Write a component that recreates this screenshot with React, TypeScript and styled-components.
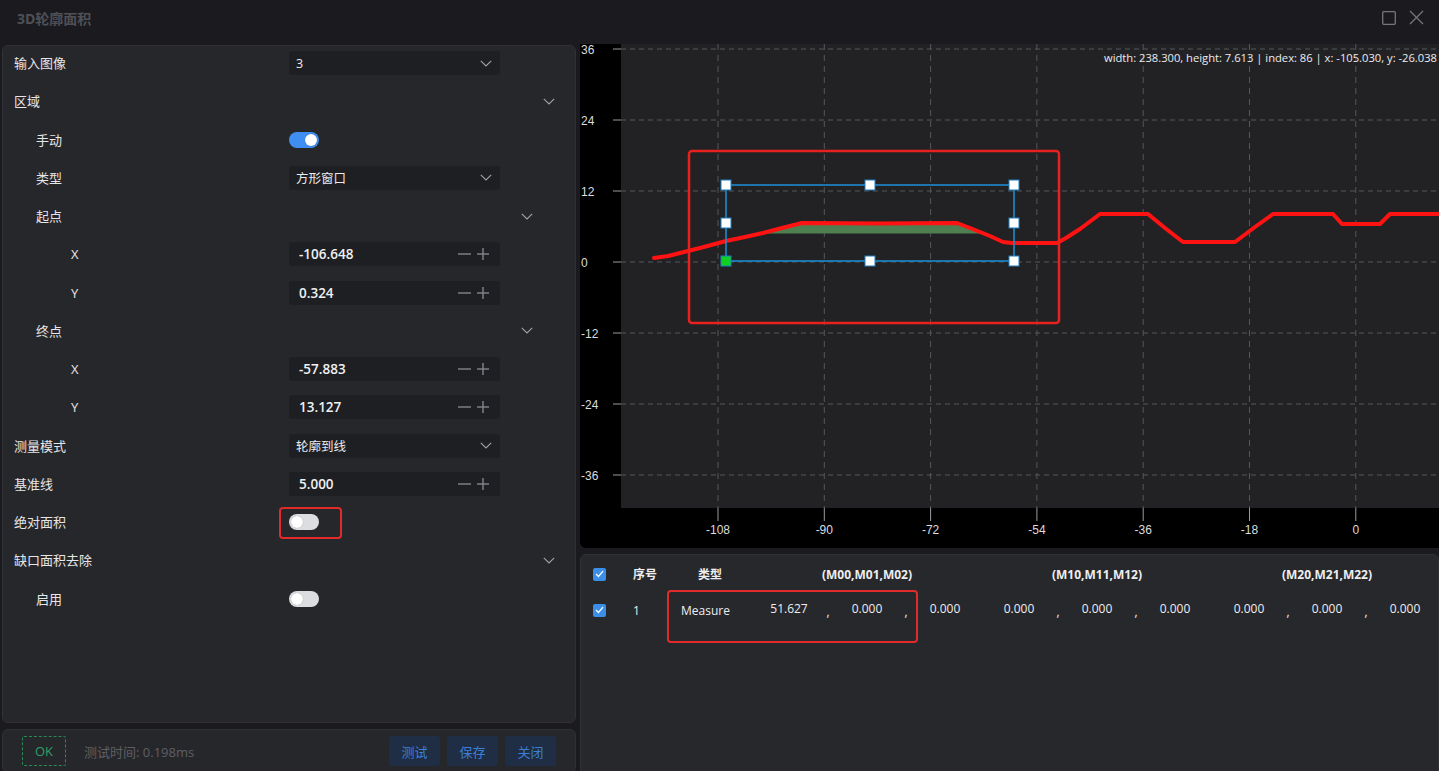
import React from 'react';
import styled, { createGlobalStyle } from 'styled-components';

const FONT = `"Open Sans", "Noto Sans CJK SC", sans-serif`;

const GlobalStyle = createGlobalStyle`
  html, body { margin: 0; padding: 0; background: #1b1b1f; }
  body { font-family: ${FONT}; }
  #root { width: 1439px; height: 771px; }
`;

const Root = styled.div`
  width: 1439px;
  height: 771px;
  overflow: hidden;
  background: #1b1b1f;
  display: flex;
  flex-direction: column;
  font-family: ${FONT};
  color: #e4e4e6;
`;

const TitleBar = styled.div`
  flex: 0 0 44px;
  height: 44px;
  box-sizing: border-box;
  display: flex;
  align-items: flex-start;
  justify-content: space-between;
  padding: 9px 15px 0 17px;
`;

const Title = styled.div`
  font-size: 14px;
  font-weight: 700;
  line-height: 20px;
  color: #4f5056;
`;

const WinButtons = styled.div`
  display: flex;
  align-items: center;
  gap: 13px;
  padding-top: 1px;
`;

const Body = styled.div`
  flex: 1;
  min-height: 0;
  display: flex;
  gap: 4px;
  padding-left: 2px;
`;

const LeftCol = styled.div`
  width: 574px;
  flex: 0 0 574px;
  display: flex;
  flex-direction: column;
  gap: 6px;
  padding-top: 1px;
`;

const SettingsPanel = styled.div`
  height: 678px;
  flex: 0 0 678px;
  box-sizing: border-box;
  background: #26272b;
  border: 1px solid #303136;
  border-radius: 6px;
  display: flex;
  flex-direction: column;
`;

const RowList = styled.div`
  display: flex;
  flex-direction: column;
  margin-top: -2px;
`;

const Row = styled.div`
  height: 38.25px;
  display: flex;
  align-items: center;
`;

const Label = styled.div<{ $level: number }>`
  width: 286px;
  flex: 0 0 286px;
  box-sizing: border-box;
  padding-left: ${(p) => [11, 33, 68][p.$level]}px;
  font-size: 13px;
  line-height: 18px;
  color: #e6e6e8;
`;

const SectionChevron = styled.div<{ $level: number }>`
  margin-left: auto;
  margin-right: ${(p) => (p.$level === 0 ? 20 : 42)}px;
  display: flex;
  align-items: center;
`;

const FieldBox = styled.div`
  width: 211px;
  height: 24px;
  box-sizing: border-box;
  background: #1e1f23;
  border-radius: 3px;
  display: flex;
  align-items: center;
  justify-content: space-between;
`;

const SelectBox = styled(FieldBox)`
  padding: 0 8px 0 7px;
  font-size: 12.5px;
  color: #ececee;
`;

const NumberBox = styled(FieldBox)`
  padding: 0 11px 0 10px;
  font-size: 13.5px;
  font-weight: 600;
  color: #f0f0f2;
`;

const Stepper = styled.div`
  display: flex;
  align-items: center;
  gap: 6px;
`;

const ToggleTrack = styled.div<{ $on: boolean }>`
  width: 30px;
  height: 16px;
  box-sizing: border-box;
  padding: 2px;
  border-radius: 8px;
  background: ${(p) => (p.$on ? '#3f8ff2' : '#dcdde1')};
  display: flex;
  justify-content: ${(p) => (p.$on ? 'flex-end' : 'flex-start')};
`;

const Knob = styled.div`
  width: 12px;
  height: 12px;
  border-radius: 50%;
  background: #ffffff;
  box-shadow: 0 0 1px rgba(0, 0, 0, 0.35);
`;

const Highlight = styled.div`
  position: relative;
  display: flex;
  &::after {
    content: '';
    position: absolute;
    left: -10px;
    top: -7px;
    width: 63px;
    height: 32px;
    box-sizing: border-box;
    border: 2px solid #e12b2b;
    border-radius: 4px;
  }
`;

const BottomBar = styled.div`
  height: 44px;
  flex: 0 0 44px;
  box-sizing: border-box;
  background: #26272b;
  border: 1px solid #303136;
  border-radius: 6px;
  display: flex;
  align-items: center;
  padding: 0 19px;
`;

const OkTag = styled.div`
  width: 44px;
  height: 30px;
  box-sizing: border-box;
  border: 1px dashed #2a8a55;
  border-radius: 2px;
  display: flex;
  align-items: center;
  justify-content: center;
  font-size: 13px;
  color: #2aa163;
`;

const TimeText = styled.div`
  margin-left: 18px;
  font-size: 13px;
  color: #5e5f65;
`;

const ButtonGroup = styled.div`
  margin-left: auto;
  display: flex;
  gap: 7px;
`;

const ActionButton = styled.div`
  width: 51px;
  height: 30px;
  border-radius: 3px;
  background: #1f2e44;
  color: #3c7fd6;
  font-size: 13px;
  display: flex;
  align-items: center;
  justify-content: center;
`;

const RightCol = styled.div`
  width: 859px;
  flex: 0 0 859px;
  display: flex;
  flex-direction: column;
  gap: 6px;
`;

const ChartBox = styled.div`
  height: 504px;
  flex: 0 0 504px;
  background: #000000;
  border-radius: 0 0 0 6px;
  overflow: hidden;
  svg { display: block; }
`;

const TablePanel = styled.div`
  height: 230px;
  flex: 0 0 230px;
  box-sizing: border-box;
  background: #27282c;
  border: 1px solid #313237;
  border-radius: 6px;
  position: relative;
  display: flex;
  flex-direction: column;
`;

const TableRow = styled.div<{ $header?: boolean }>`
  height: 36px;
  margin-top: ${(p) => (p.$header ? 1 : 0)}px;
  display: flex;
  align-items: center;
  padding-left: 12px;
  font-size: 12px;
  font-weight: ${(p) => (p.$header ? 700 : 400)};
  color: #eeeef0;
`;

const CheckCell = styled.div`
  width: 40px;
  flex: 0 0 40px;
  display: flex;
`;

const IndexCell = styled.div`
  width: 48px;
  flex: 0 0 48px;
`;

const TypeCell = styled.div<{ $header?: boolean }>`
  width: 76px;
  flex: 0 0 76px;
  box-sizing: border-box;
  padding-left: ${(p) => (p.$header ? 17 : 0)}px;
`;

const Group = styled.div`
  width: 220px;
  flex: 0 0 220px;
  margin-right: 10px;
  display: flex;
  justify-content: center;
`;

const ValueCell = styled.div`
  width: 64px;
  flex: 0 0 64px;
  text-align: center;
`;

const CommaCell = styled.div`
  width: 14px;
  flex: 0 0 14px;
  text-align: center;
  padding-top: 3px;
`;

const CheckBox = styled.div`
  width: 13px;
  height: 13px;
  border-radius: 2px;
  background: #3b8fe8;
  display: flex;
  align-items: center;
  justify-content: center;
`;

const TableMark = styled.div`
  position: absolute;
  left: 86px;
  top: 35px;
  width: 251px;
  height: 53px;
  box-sizing: border-box;
  border: 2px solid #e12b2b;
  border-radius: 4px;
  pointer-events: none;
`;

/* ---------- icons ---------- */

const Chevron = () => (
  <svg width="12" height="7" viewBox="0 0 12 7">
    <polyline points="0.8,0.8 6,6 11.2,0.8" fill="none" stroke="#a2a3a8" strokeWidth="1.1" />
  </svg>
);

const Minus = () => (
  <svg width="13" height="12" viewBox="0 0 13 12">
    <line x1="0" y1="6" x2="13" y2="6" stroke="#85868c" strokeWidth="1.4" />
  </svg>
);

const Plus = () => (
  <svg width="12" height="12" viewBox="0 0 12 12">
    <line x1="0" y1="6" x2="12" y2="6" stroke="#85868c" strokeWidth="1.4" />
    <line x1="6" y1="0" x2="6" y2="12" stroke="#85868c" strokeWidth="1.4" />
  </svg>
);

const Check = () => (
  <svg width="9" height="8" viewBox="0 0 9 8">
    <polyline points="1,4 3.5,6.5 8,1.2" fill="none" stroke="#ffffff" strokeWidth="1.3" />
  </svg>
);

const MaxIcon = () => (
  <svg width="14" height="14" viewBox="0 0 14 14">
    <rect x="0.7" y="0.7" width="12.6" height="12.6" rx="1" fill="none" stroke="#76777c" strokeWidth="1.3" />
  </svg>
);

const CloseIcon = () => (
  <svg width="15" height="15" viewBox="0 0 15 15">
    <line x1="1" y1="1" x2="14" y2="14" stroke="#76777c" strokeWidth="1.3" />
    <line x1="14" y1="1" x2="1" y2="14" stroke="#76777c" strokeWidth="1.3" />
  </svg>
);

/* ---------- settings ---------- */

type RowDef =
  | { label: string; level: number; type: 'select'; value: string }
  | { label: string; level: number; type: 'number'; value: string }
  | { label: string; level: number; type: 'section' }
  | { label: string; level: number; type: 'toggle'; on: boolean; mark?: boolean };

const rows: RowDef[] = [
  { label: '输入图像', level: 0, type: 'select', value: '3' },
  { label: '区域', level: 0, type: 'section' },
  { label: '手动', level: 1, type: 'toggle', on: true },
  { label: '类型', level: 1, type: 'select', value: '方形窗口' },
  { label: '起点', level: 1, type: 'section' },
  { label: 'X', level: 2, type: 'number', value: '-106.648' },
  { label: 'Y', level: 2, type: 'number', value: '0.324' },
  { label: '终点', level: 1, type: 'section' },
  { label: 'X', level: 2, type: 'number', value: '-57.883' },
  { label: 'Y', level: 2, type: 'number', value: '13.127' },
  { label: '测量模式', level: 0, type: 'select', value: '轮廓到线' },
  { label: '基准线', level: 0, type: 'number', value: '5.000' },
  { label: '绝对面积', level: 0, type: 'toggle', on: false, mark: true },
  { label: '缺口面积去除', level: 0, type: 'section' },
  { label: '启用', level: 1, type: 'toggle', on: false },
];

const Toggle = ({ on }: { on: boolean }) => (
  <ToggleTrack $on={on}>
    <Knob />
  </ToggleTrack>
);

const SettingRow = ({ def }: { def: RowDef }) => {
  let control: React.ReactNode = null;
  if (def.type === 'select') {
    control = (
      <SelectBox>
        <span>{def.value}</span>
        <Chevron />
      </SelectBox>
    );
  } else if (def.type === 'number') {
    control = (
      <NumberBox>
        <span>{def.value}</span>
        <Stepper>
          <Minus />
          <Plus />
        </Stepper>
      </NumberBox>
    );
  } else if (def.type === 'toggle') {
    control = def.mark ? (
      <Highlight>
        <Toggle on={def.on} />
      </Highlight>
    ) : (
      <Toggle on={def.on} />
    );
  }
  return (
    <Row>
      <Label $level={def.level}>{def.label}</Label>
      {control}
      {def.type === 'section' && (
        <SectionChevron $level={def.level}>
          <Chevron />
        </SectionChevron>
      )}
    </Row>
  );
};

/* ---------- chart ---------- */

const CW = 859;
const CH = 504;
const PL = 41;
const PB = 464;
const xPx = (v: number) => 138 + ((v + 108) * 106.3) / 18;
const yPx = (v: number) => 218 - (v * 71) / 12;
const xTicks = [-108, -90, -72, -54, -36, -18, 0];
const yTicks = [36, 24, 12, 0, -12, -24, -36];

const curveScreen: [number, number][] = [
  [654, 258], [668, 256], [680, 253], [700, 248], [726, 241], [745, 237], [763, 233],
  [782, 228], [802, 223], [880, 223.5], [957, 223], [970, 228], [990, 236], [1003, 242],
  [1012, 243], [1057, 243], [1066, 238], [1080, 229], [1100, 214], [1148, 214],
  [1165, 228], [1183, 242], [1235, 242], [1255, 227], [1273, 214], [1333, 214],
  [1342, 224], [1380, 224], [1390, 214], [1439, 214],
];
const toLocal = (pts: [number, number][]) => pts.map(([x, y]) => `${x - 580},${y - 44}`).join(' ');

const fillScreen: [number, number][] = [
  [757, 233.5], [763, 232], [782, 227], [802, 222], [957, 222], [970, 227], [981, 233.5],
];

const handles: [number, number, boolean][] = [
  [726, 185, false], [870, 185, false], [1014, 185, false],
  [726, 223, false], [1014, 223, false],
  [726, 261, true], [870, 261, false], [1014, 261, false],
];

const Chart = () => (
  <svg width={CW} height={CH} viewBox={`0 0 ${CW} ${CH}`} fontFamily={`"Liberation Sans", Arial, sans-serif`}>
    <rect x={PL} y={0} width={CW - PL} height={PB} fill="#222225" />
    {yTicks.map((v) => (
      <g key={`y${v}`}>
        <line x1={PL} y1={yPx(v)} x2={CW} y2={yPx(v)} stroke="#55565b" strokeWidth="1" strokeDasharray="5 4" />
        <line x1={33} y1={yPx(v)} x2={PL} y2={yPx(v)} stroke="#9a9ba0" strokeWidth="1" />
        <text x={1} y={yPx(v) + 4.5} fontSize="12" fill="#dcdcde">{v}</text>
      </g>
    ))}
    {xTicks.map((v) => (
      <g key={`x${v}`}>
        <line x1={xPx(v)} y1={0} x2={xPx(v)} y2={PB} stroke="#55565b" strokeWidth="1" strokeDasharray="6 5" />
        <line x1={xPx(v)} y1={PB} x2={xPx(v)} y2={PB + 13} stroke="#9a9ba0" strokeWidth="1" />
        <text x={xPx(v)} y={490} fontSize="12" fill="#dcdcde" textAnchor="middle">{v}</text>
      </g>
    ))}
    <polygon points={toLocal(fillScreen)} fill="#4f7f50" />
    <polyline points={toLocal(fillScreen.slice(1, -1))} fill="none" stroke="#d0703a" strokeWidth="1.5" transform="translate(0,1.5)" />
    <polyline points={toLocal(curveScreen)} fill="none" stroke="#ff1212" strokeWidth="4" strokeLinejoin="round" strokeLinecap="round" />
    <rect x={726 - 580} y={185 - 44} width={288} height={76} fill="none" stroke="#1f8ad0" strokeWidth="1.6" />
    {handles.map(([x, y, g], i) => (
      <rect key={i} x={x - 580 - 5} y={y - 44 - 5} width={10} height={10} fill={g ? '#10d020' : '#ffffff'} stroke="#1e7fc0" strokeWidth="1" />
    ))}
    <rect x={689 - 580} y={151 - 44} width={370} height={172} rx="3" fill="none" stroke="#e8201e" strokeWidth="2.5" />
    <text x={857} y={18} fontSize="11.2" fill="#ececee" textAnchor="end" fontFamily={FONT}>
      width: 238.300, height: 7.613 | index: 86 | x: -105.030, y: -26.038
    </text>
  </svg>
);

/* ---------- table ---------- */

const groups = [
  { title: '(M00,M01,M02)', values: ['51.627', '0.000', '0.000'] },
  { title: '(M10,M11,M12)', values: ['0.000', '0.000', '0.000'] },
  { title: '(M20,M21,M22)', values: ['0.000', '0.000', '0.000'] },
];

const ResultTable = () => (
  <TablePanel>
    <TableRow $header>
      <CheckCell>
        <CheckBox><Check /></CheckBox>
      </CheckCell>
      <IndexCell>序号</IndexCell>
      <TypeCell $header>类型</TypeCell>
      {groups.map((g) => (
        <Group key={g.title}>{g.title}</Group>
      ))}
    </TableRow>
    <TableRow>
      <CheckCell>
        <CheckBox><Check /></CheckBox>
      </CheckCell>
      <IndexCell>1</IndexCell>
      <TypeCell>Measure</TypeCell>
      {groups.map((g) => (
        <Group key={g.title}>
          <ValueCell>{g.values[0]}</ValueCell>
          <CommaCell>,</CommaCell>
          <ValueCell>{g.values[1]}</ValueCell>
          <CommaCell>,</CommaCell>
          <ValueCell>{g.values[2]}</ValueCell>
        </Group>
      ))}
    </TableRow>
    <TableMark />
  </TablePanel>
);

export default function App() {
  return (
    <>
      <GlobalStyle />
      <Root>
        <TitleBar>
          <Title>3D轮廓面积</Title>
          <WinButtons>
            <MaxIcon />
            <CloseIcon />
          </WinButtons>
        </TitleBar>
        <Body>
          <LeftCol>
            <SettingsPanel>
              <RowList>
                {rows.map((r, i) => (
                  <SettingRow key={i} def={r} />
                ))}
              </RowList>
            </SettingsPanel>
            <BottomBar>
              <OkTag>OK</OkTag>
              <TimeText>测试时间: 0.198ms</TimeText>
              <ButtonGroup>
                <ActionButton>测试</ActionButton>
                <ActionButton>保存</ActionButton>
                <ActionButton>关闭</ActionButton>
              </ButtonGroup>
            </BottomBar>
          </LeftCol>
          <RightCol>
            <ChartBox>
              <Chart />
            </ChartBox>
            <ResultTable />
          </RightCol>
        </Body>
      </Root>
    </>
  );
}
